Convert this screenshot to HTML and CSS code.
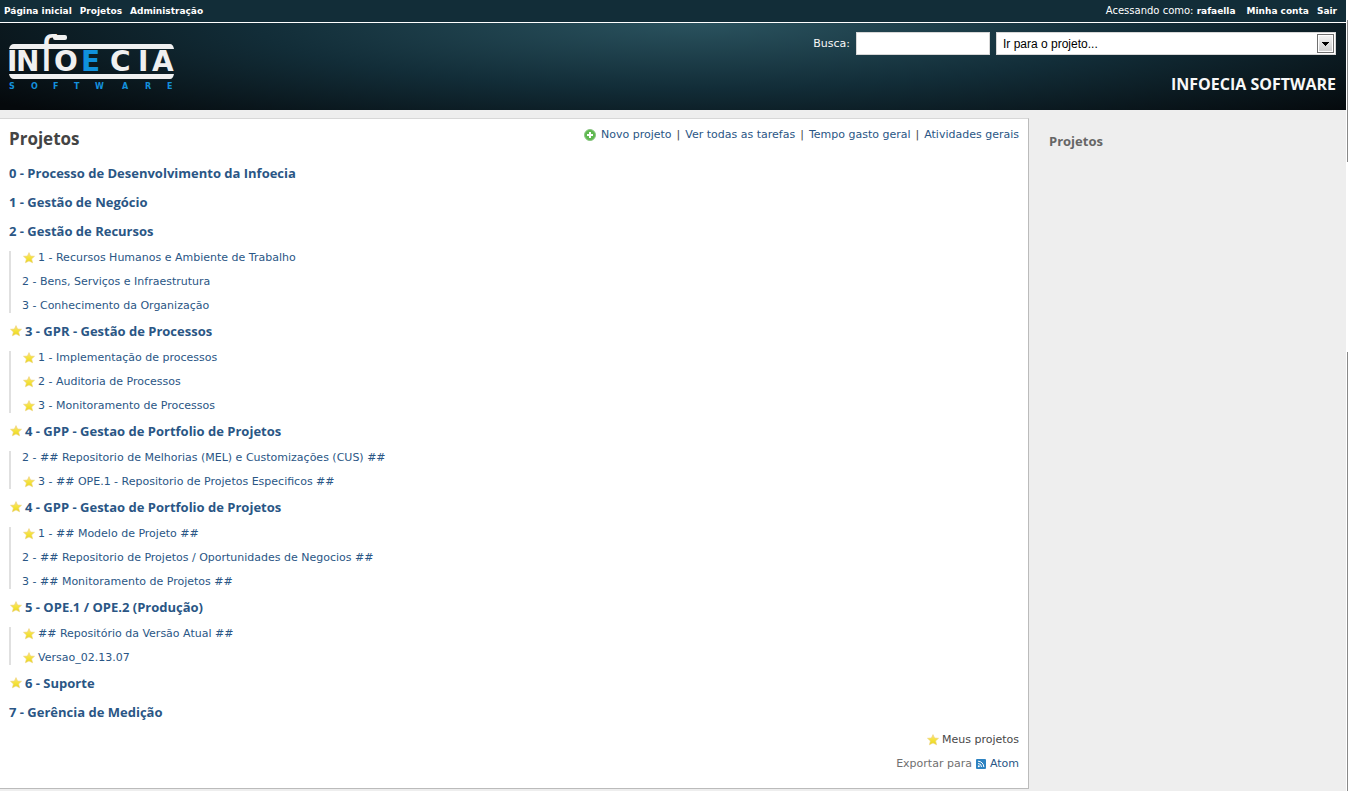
FILE: index.html
```html
<!DOCTYPE html>
<html lang="pt-BR">
<head>
<meta charset="utf-8">
<title>Projetos - Infoecia Software</title>
<link rel="stylesheet" href="styles.css">
</head>
<body>
<svg class="defs" aria-hidden="true">
  <defs>
    <linearGradient id="gold" x1="0" y1="0" x2="0" y2="1"><stop offset="0" stop-color="#fbe08a"/><stop offset=".5" stop-color="#f5e33c"/><stop offset="1" stop-color="#e8d51c"/></linearGradient>
    <symbol id="star" viewBox="0 0 12 12"><path d="M6 .6 7.600 4l3.900.3-2.900 2.600 1 3.900L6 8.900l-3.600 1.900 1-3.900L.5 4.300 4.400 4Z" fill="url(#gold)" stroke="#ecd27c" stroke-width=".6" stroke-linejoin="round"/></symbol>
  </defs>
</svg>
<div class="page">
  <nav class="top-menu">
    <div class="menu-links">
      <a href="#">Página inicial</a>
      <a href="#">Projetos</a>
      <a href="#">Administração</a>
    </div>
    <div class="account">
      <span class="logged">Acessando como: <a href="#">rafaella</a></span>
      <a href="#">Minha conta</a>
      <a href="#">Sair</a>
    </div>
  </nav>
  <header class="header">
    <svg class="logo" viewBox="0 0 172 60" role="img" aria-label="Infoecia Software">
      <g fill="#f0f0f0">
        <path d="M6 10h156q3 0 4 5H1q1-5 5-5Z"/>
        <path d="M1 40h165q-1 5-4 5H6q-4 0-5-5Z"/>
        <rect x="45" y="1" width="14" height="5" rx="2"/>
      </g>
      <text class="logo-name" y="37" x="-1 8 31 46 73 102 130 144" fill="#f0f0f0">IN<tspan class="logo-f">f</tspan>O<tspan class="logo-e">E</tspan>CIA</text>
      <text class="logo-sub" y="55" x="1 23 45 66 87 114 137 159">SOFTWARE</text>
    </svg>
    <div class="header-side">
      <form class="quick-search">
        <label for="q">Busca:</label>
        <input id="q" type="text">
        <select aria-label="Ir para o projeto"><option>Ir para o projeto...</option></select>
      </form>
      <h1>INFOECIA SOFTWARE</h1>
    </div>
  </header>
  <div class="main">
    <main class="content">
      <div class="title-row">
        <h2>Projetos</h2>
        <div class="contextual">
          <svg class="add" viewBox="0 0 12 12"><circle cx="6" cy="6" r="5.500" fill="#5fb94f" stroke="#8ac583"/><path d="M6 3v6M3 6h6" stroke="#fff" stroke-width="2"/></svg>
          <a href="#">Novo projeto</a><span>|</span><a href="#">Ver todas as tarefas</a><span>|</span><a href="#">Tempo gasto geral</a><span>|</span><a href="#">Atividades gerais</a>
        </div>
      </div>
      <ul class="projects">
        <li><a class="root" href="#">0 - Processo de Desenvolvimento da Infoecia</a></li>
        <li><a class="root" href="#">1 - Gestão de Negócio</a></li>
        <li class="parent"><a class="root" href="#">2 - Gestão de Recursos</a>
          <ul class="children">
            <li><a class="my" href="#"><svg class="star"><use href="#star"/></svg>1 - Recursos Humanos e Ambiente de Trabalho</a></li>
            <li><a href="#">2 - Bens, Serviços e Infraestrutura</a></li>
            <li><a href="#">3 - Conhecimento da Organização</a></li>
          </ul></li>
        <li class="parent"><a class="root my" href="#"><svg class="star"><use href="#star"/></svg>3 - GPR - Gestão de Processos</a>
          <ul class="children">
            <li><a class="my" href="#"><svg class="star"><use href="#star"/></svg>1 - Implementação de processos</a></li>
            <li><a class="my" href="#"><svg class="star"><use href="#star"/></svg>2 - Auditoria de Processos</a></li>
            <li><a class="my" href="#"><svg class="star"><use href="#star"/></svg>3 - Monitoramento de Processos</a></li>
          </ul></li>
        <li class="parent"><a class="root my" href="#"><svg class="star"><use href="#star"/></svg>4 - GPP - Gestao de Portfolio de Projetos</a>
          <ul class="children">
            <li><a href="#">2 - ## Repositorio de Melhorias (MEL) e Customizações (CUS) ##</a></li>
            <li><a class="my" href="#"><svg class="star"><use href="#star"/></svg>3 - ## OPE.1 - Repositorio de Projetos Especificos ##</a></li>
          </ul></li>
        <li class="parent"><a class="root my" href="#"><svg class="star"><use href="#star"/></svg>4 - GPP - Gestao de Portfolio de Projetos</a>
          <ul class="children">
            <li><a class="my" href="#"><svg class="star"><use href="#star"/></svg>1 - ## Modelo de Projeto ##</a></li>
            <li><a href="#">2 - ## Repositorio de Projetos / Oportunidades de Negocios ##</a></li>
            <li><a href="#">3 - ## Monitoramento de Projetos ##</a></li>
          </ul></li>
        <li class="parent"><a class="root my" href="#"><svg class="star"><use href="#star"/></svg>5 - OPE.1 / OPE.2 (Produção)</a>
          <ul class="children">
            <li><a class="my" href="#"><svg class="star"><use href="#star"/></svg>## Repositório da Versão Atual ##</a></li>
            <li><a class="my" href="#"><svg class="star"><use href="#star"/></svg>Versao_02.13.07</a></li>
          </ul></li>
        <li><a class="root my" href="#"><svg class="star"><use href="#star"/></svg>6 - Suporte</a></li>
        <li><a class="root" href="#">7 - Gerência de Medição</a></li>
      </ul>
      <p class="legend"><svg class="star"><use href="#star"/></svg>Meus projetos</p>
      <p class="formats">Exportar para
        <svg class="feed" viewBox="0 0 10 10"><rect width="10" height="10" rx="1" fill="#2d83c2"/><circle cx="2.800" cy="7.300" r="1" fill="#fff"/><path d="M2 4.500a3.500 3.500 0 0 1 3.500 3.500M2 2.200A5.800 5.800 0 0 1 7.800 8" fill="none" stroke="#fff"/></svg>
        <a href="#">Atom</a></p>
    </main>
    <aside class="sidebar"><h3>Projetos</h3></aside>
  </div>
</div>
</body>
</html>
```
FILE: styles.css
```css
* { box-sizing: border-box; }
body {
  margin: 0;
  min-height: 100vh;
  padding-right: 2px;
  font: 11px/14px "DejaVu Sans", Verdana, sans-serif;
  color: #484848;
  background: linear-gradient(#fff 20px, #888 20px 162px, #fff 162px 352px, #888 352px) right / 1px 100% no-repeat #fff;
}
h1, h2, h3, p, ul { margin: 0; padding: 0; }
ul { list-style: none; }
a { color: #2a5685; text-decoration: none; }
.defs { position: absolute; width: 0; height: 0; }
.page { min-height: 100vh; display: flex; flex-direction: column; background: #eee; }

.top-menu {
  display: flex;
  justify-content: space-between;
  height: 23px;
  padding: 0 9px 0 4px;
  border-bottom: 1px solid #fff;
  background: #122d38;
  color: #fff;
  font-size: 10px;
  line-height: 22px;
}
.top-menu a { color: #fff; font-weight: bold; font-size: 9px; }
.menu-links, .account { display: flex; gap: 8px; }
.logged { margin-right: 3px; }

.header {
  display: flex;
  justify-content: space-between;
  height: 87px;
  padding: 9px 10px 0 8px;
  color: #f8f8f8;
  background: radial-gradient(ellipse 66% 150% at 52% 0, #2a525e, #122d38 50%, #0a171d 80%, #05090c);
}
.logo { width: 172px; height: 60px; margin-top: 2px; overflow: visible; }
.logo-name { font: bold 28px "DejaVu Sans", sans-serif; }
.logo-f { font: 48px "DejaVu Sans", sans-serif; }
.logo-e { fill: #1091dc; }
.logo-sub { font: bold 8px "DejaVu Sans", sans-serif; fill: #1490dc; }
.header-side { display: flex; flex-direction: column; align-items: flex-end; gap: 18px; }
.quick-search { display: flex; align-items: center; gap: 6px; }
.quick-search input, .quick-search select {
  height: 23px;
  border: 1px solid #d7d7d7;
  border-radius: 0;
  background: #fff;
}
.quick-search input { width: 134px; }
.quick-search select {
  width: 340px;
  padding: 0 6px;
  appearance: none;
  color: #000;
  font: 12px "Liberation Sans", Arial, sans-serif;
  background:
    linear-gradient(#000, #000) right 6px top 9px / 7px 1px no-repeat,
    linear-gradient(#000, #000) right 7px top 10px / 5px 1px no-repeat,
    linear-gradient(#000, #000) right 8px top 11px / 3px 1px no-repeat,
    linear-gradient(#000, #000) right 9px top 12px / 1px 1px no-repeat,
    linear-gradient(#f2f2f2, #cfcfcf) right 3px top 3px / 13px 15px no-repeat,
    linear-gradient(#fff, #fff) right 2px top 2px / 15px 17px no-repeat,
    linear-gradient(#707070, #707070) right 1px top 1px / 17px 19px no-repeat,
    #fff;
}
h1, h2, h3, .root { font-family: "Open Sans", "Trebuchet MS", sans-serif; font-weight: bold; }
h1 { font-size: 16px; line-height: 22px; }

.main { flex: 1; display: flex; padding: 8px 0 2px; }
.content {
  flex: 1;
  padding: 8px 9px 16px;
  background: #fff;
  border: solid #bbb;
  border-width: 1px 1px 1px 0;
  border-top-color: #d7d7d7;
}
.sidebar { width: 317px; padding: 14px 20px; }
.sidebar h3 { font-size: 13px; line-height: 18px; color: #666; }
.title-row { display: flex; justify-content: space-between; align-items: flex-start; margin-bottom: 14px; }
h2 { font-size: 17px; line-height: 23px; color: #444; }
.contextual { display: flex; align-items: center; gap: 5px; line-height: 16px; }
.add { width: 12px; height: 12px; }

.projects > li { margin-bottom: 11px; }
.projects > .parent { margin-bottom: 9px; }
.root { display: block; font-size: 13px; line-height: 18px; }
.my { display: flex; align-items: center; gap: 3px; padding-left: 1px; }
.children { display: grid; gap: 10px; margin-top: 11px; padding-left: 11px; border-left: 2px solid #e0e0e0; }
.star { width: 12px; height: 12px; flex: none; }
.legend { display: flex; justify-content: flex-end; align-items: center; gap: 3px; padding-top: 1px; margin-bottom: 10px; }
.formats { display: flex; justify-content: flex-end; align-items: center; gap: 4px; color: #707070; }
.feed { width: 10px; height: 10px; }
```
